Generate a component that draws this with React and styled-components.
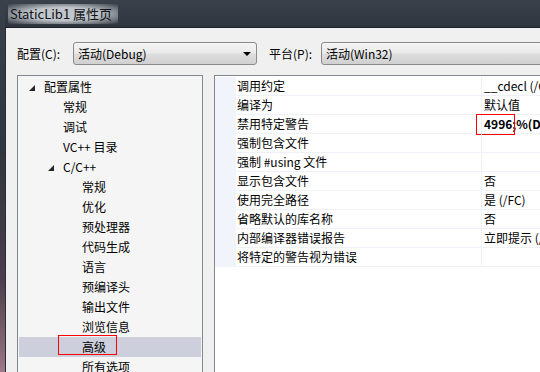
import React from 'react'
import styled, { createGlobalStyle } from 'styled-components'

const GlobalStyle = createGlobalStyle`
  html, body { margin: 0; padding: 0; overflow: hidden; }
  body {
    width: 540px; height: 372px;
    font-family: "Noto Sans CJK SC", "Liberation Sans", sans-serif;
    font-size: 12px;
    color: #000;
  }
`

const Screen = styled.div`
  display: flex;
  width: 540px;
  height: 372px;
  background: #2f353d;
  overflow: hidden;
`

const Frame = styled.div`
  width: 5px;
  flex: none;
  background: linear-gradient(180deg, #3a4049 0%, #30363f 40%, #4a3e4a 75%, #8c6a78 95%, #a07a88 100%);
`

const Main = styled.div`
  flex: 1;
  display: flex;
  flex-direction: column;
  min-width: 0;
`

const TitleBar = styled.div`
  height: 27px;
  flex: none;
  display: flex;
  align-items: center;
  padding-left: 3px;
  background: linear-gradient(180deg, #3b424b 0%, #2f353e 100%);
`

const Title = styled.span`
  font-size: 13px;
  line-height: 16px;
  color: #101215;
  padding: 2px 6px 2px 2px;
  background: radial-gradient(ellipse at center, rgba(200,205,210,0.95) 45%, rgba(160,166,172,0.6) 75%, rgba(60,66,74,0) 100%);
`

const Client = styled.div`
  flex: 1;
  display: flex;
  flex-direction: column;
  background: #f0f0f0;
  border-top: 1px solid #1d2126;
  border-left: 1px solid #2a2e34;
  padding: 14px 0 0 11px;
  min-height: 0;
`

const ConfigRow = styled.div`
  display: flex;
  align-items: center;
  height: 23px;
`

const Label = styled.span`
  width: ${p => p.$w}px;
  flex: none;
  line-height: 16px;
`

const Combo = styled.div`
  position: relative;
  width: ${p => p.$w}px;
  height: 23px;
  flex: none;
  box-sizing: border-box;
  border: 1px solid #8a8a8a;
  border-radius: 3px;
  background: linear-gradient(180deg, #f4f4f4 0%, #ebebeb 45%, #dddddd 55%, #d0d0d0 100%);
  display: flex;
  align-items: center;
  padding-left: 4px;
  line-height: 16px;
  margin-right: 12px;
`

const Arrow = styled.span`
  position: absolute;
  right: 5px;
  top: 9px;
  width: 0;
  height: 0;
  border-left: 4px solid transparent;
  border-right: 4px solid transparent;
  border-top: 4px solid #000;
`

const Panels = styled.div`
  flex: 1;
  display: flex;
  gap: 11px;
  margin-top: 10px;
  min-height: 0;
`

const TreePanel = styled.div`
  width: 186px;
  flex: none;
  box-sizing: border-box;
  border: 1px solid #828790;
  border-bottom: none;
  background: #f5f5f5;
  padding: 1px 1px 0;
`

const TreeRow = styled.div`
  position: relative;
  height: 20px;
  display: flex;
  align-items: center;
  padding-left: ${p => 25 + p.$level * 19}px;
  background: ${p => (p.$selected ? '#cdcfdc' : 'transparent')};
  line-height: 16px;
`

const Toggle = styled.svg`
  position: absolute;
  left: ${p => 10 + p.$level * 19}px;
  top: 8px;
`

const Mark = styled.span`
  position: absolute;
  left: ${p => p.$left}px;
  top: ${p => p.$top}px;
  width: ${p => p.$w}px;
  height: ${p => p.$h}px;
  box-sizing: border-box;
  border: 1px solid #ff0000;
  pointer-events: none;
`

const GridPanel = styled.div`
  flex: 1;
  box-sizing: border-box;
  border-left: 1px solid #828790;
  border-top: 1px solid #828790;
  background: #ffffff;
  padding-top: 1px;
  min-width: 0;
  overflow: hidden;
`

const PropRow = styled.div`
  display: grid;
  grid-template-columns: 21px 246px 1fr;
  height: 19px;
`

const Gutter = styled.div`
  background: #f1f4fa;
`

const Cell = styled.div`
  position: relative;
  display: flex;
  align-items: center;
  padding-left: ${p => p.$pad}px;
  border-bottom: 1px solid #eef1f7;
  border-right: ${p => (p.$divider ? '1px solid #eef1f7' : 'none')};
  white-space: nowrap;
  font-weight: ${p => (p.$bold ? 700 : 400)};
  line-height: 16px;
`

const tree = [
  { text: '配置属性', level: 0, open: true },
  { text: '常规', level: 1 },
  { text: '调试', level: 1 },
  { text: 'VC++ 目录', level: 1 },
  { text: 'C/C++', level: 1, open: true },
  { text: '常规', level: 2 },
  { text: '优化', level: 2 },
  { text: '预处理器', level: 2 },
  { text: '代码生成', level: 2 },
  { text: '语言', level: 2 },
  { text: '预编译头', level: 2 },
  { text: '输出文件', level: 2 },
  { text: '浏览信息', level: 2 },
  { text: '高级', level: 2, selected: true },
  { text: '所有选项', level: 2 },
]

const props = [
  ['调用约定', '__cdecl (/Gd)'],
  ['编译为', '默认值'],
  ['禁用特定警告', '4996;%(DisableSpecificWarnings)', true],
  ['强制包含文件', ''],
  ['强制 #using 文件', ''],
  ['显示包含文件', '否'],
  ['使用完全路径', '是 (/FC)'],
  ['省略默认的库名称', '否'],
  ['内部编译器错误报告', '立即提示 (/errorReport:prompt)'],
  ['将特定的警告视为错误', ''],
]

export default function App() {
  return (
    <Screen>
      <GlobalStyle />
      <Frame />
      <Main>
        <TitleBar>
          <Title>StaticLib1 属性页</Title>
        </TitleBar>
        <Client>
          <ConfigRow>
            <Label $w={56}>配置(C):</Label>
            <Combo $w={184}>
              活动(Debug)
              <Arrow />
            </Combo>
            <Label $w={52}>平台(P):</Label>
            <Combo $w={240}>活动(Win32)</Combo>
          </ConfigRow>
          <Panels>
            <TreePanel>
              {tree.map((item, i) => (
                <TreeRow key={i} $level={item.level} $selected={item.selected}>
                  {item.open && (
                    <Toggle $level={item.level} width="6" height="6" viewBox="0 0 6 6">
                      <polygon points="6,0 6,6 0,6" fill="#262626" />
                    </Toggle>
                  )}
                  {item.text}
                  {item.selected && <Mark $left={39} $top={-2} $w={59} $h={20} />}
                </TreeRow>
              ))}
            </TreePanel>
            <GridPanel>
              {props.map(([name, value, bold], i) => (
                <PropRow key={i}>
                  <Gutter />
                  <Cell $pad={1} $divider>{name}</Cell>
                  <Cell $pad={2} $bold={bold}>
                    {value}
                    {bold && <Mark $left={-6} $top={-1} $w={39} $h={21} />}
                  </Cell>
                </PropRow>
              ))}
            </GridPanel>
          </Panels>
        </Client>
      </Main>
    </Screen>
  )
}
